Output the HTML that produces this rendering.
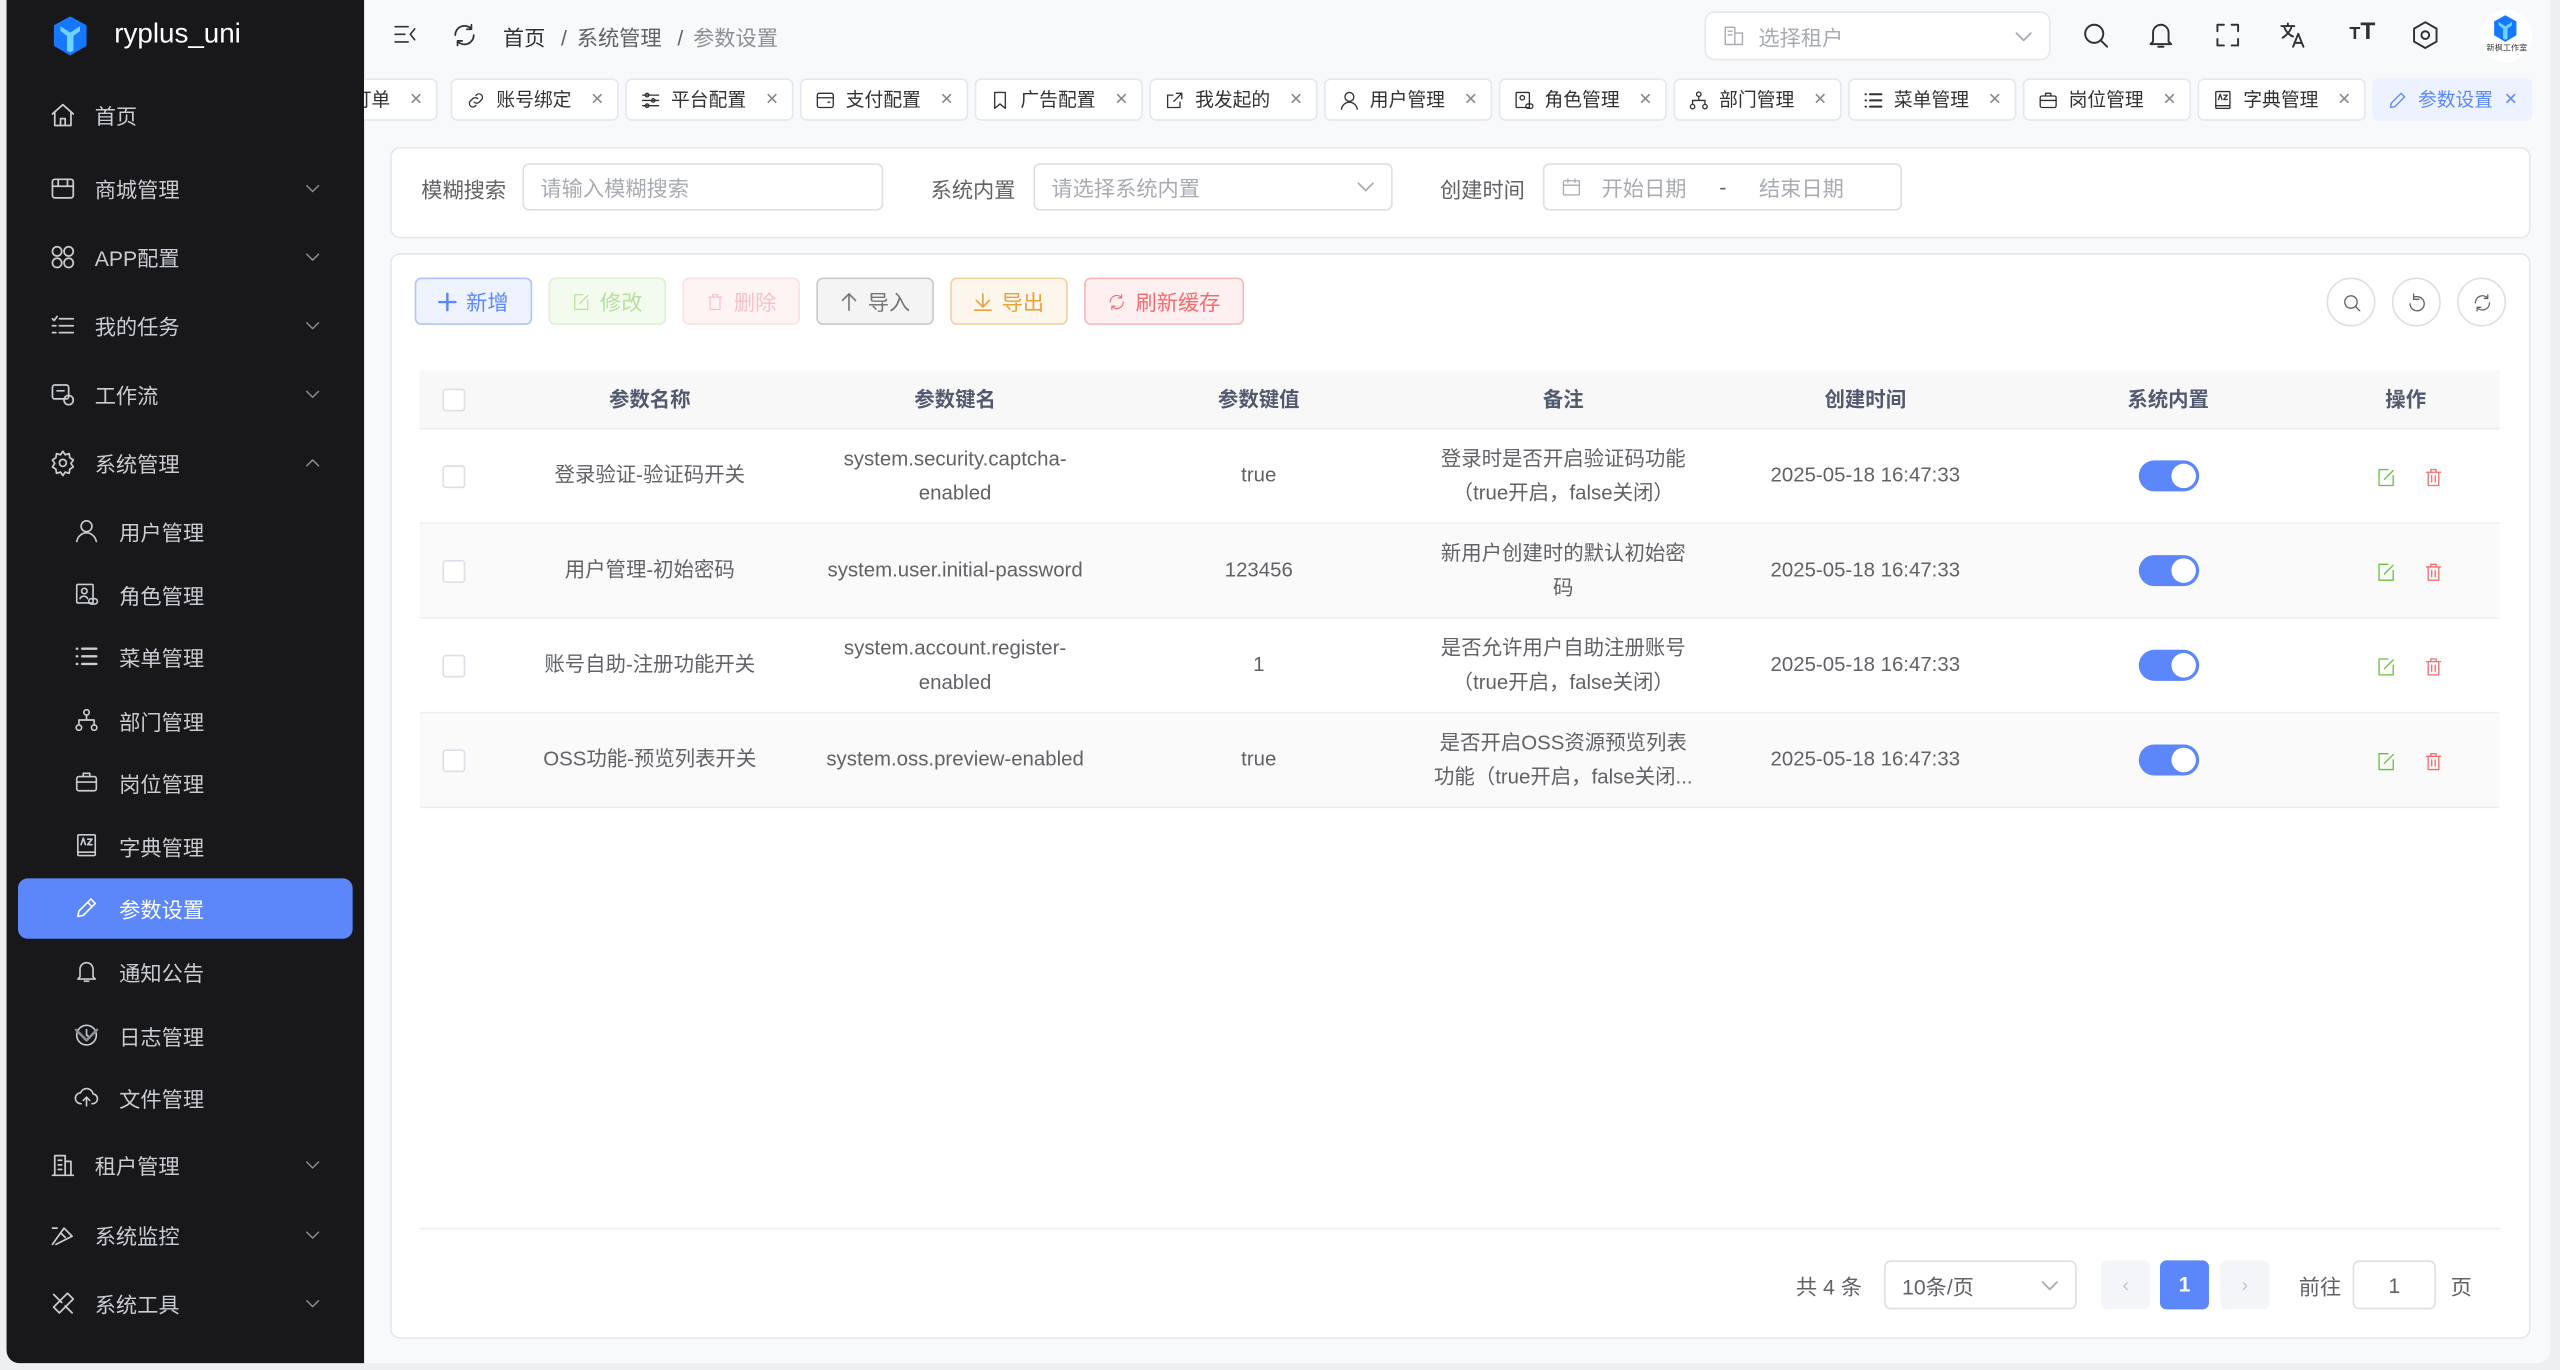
<!DOCTYPE html>
<html><head><meta charset="utf-8">
<style>
*{box-sizing:border-box;margin:0;padding:0}
html,body{width:2560px;height:1370px;overflow:hidden;background:#eeeff1}
body{font-family:"Liberation Sans","Noto Sans CJK SC",sans-serif;}
#f{position:absolute;left:0;top:0;width:1568px;height:839px;transform:scale(1.632653);transform-origin:0 0;background:#eeeff1}
.a{position:absolute}
#app{left:4px;top:0;width:1558px;height:835px;border-radius:0 0 8px 8px;overflow:hidden;background:#f8f9fb}
#side{left:0;top:0;width:219px;height:835px;background:#18181b;color:#c9ccd2;font-size:13px}
.mi{position:absolute;left:0;width:219px;height:38px;display:flex;align-items:center}
.mi svg{position:absolute;left:26px;width:17px;height:17px}
.mi span{position:absolute;left:54px}
.mi.sub svg{left:41px;width:16px;height:16px}
.mi.sub span{left:69px}
.mi .ar{position:absolute;left:183px;width:9px;height:9px;stroke-width:1;color:#8a8d93}
svg{fill:none;stroke:currentColor;stroke-width:1.5;stroke-linecap:round;stroke-linejoin:round}
#tabs{left:219px;top:44px;width:1339px;height:34px;overflow:hidden}
.tab{position:absolute;top:4px;height:26px;background:#fff;border:1px solid #e4e7ed;border-radius:4px;font-size:11.5px;color:#303133;display:flex;align-items:center;padding-left:8px}
.tab svg{width:13px;height:13px;margin-right:6px}
.tab .x{position:absolute;right:8px;font-size:10px;color:#888}
.card{background:#fff;border:1px solid #e4e7ed;border-radius:6px}
.lbl{font-size:13px;color:#606266}
.inp{border:1px solid #dcdfe6;border-radius:4px;height:29px;font-size:13px;color:#a8abb2;display:flex;align-items:center;padding-left:10px;background:#fff}
.btn{position:absolute;top:170px;height:29px;border-radius:4px;font-size:13px;display:flex;align-items:center;justify-content:center;gap:5px}
.btn svg{width:12px;height:12px}
.cb{position:absolute;left:14px;width:14px;height:14px;border:1px solid #dcdfe6;border-radius:2px;background:#fff}
.row{position:absolute;left:0;width:1274px;height:58px;border-bottom:1px solid #ebeef5}
.cell{position:absolute;top:0;height:57px;display:flex;align-items:center;justify-content:center;text-align:center;font-size:12.5px;color:#606266;line-height:21px}
.sw{position:absolute;left:1053px;top:19px;width:37px;height:19px;border-radius:10px;background:#5b87fb}
.sw:after{content:"";position:absolute;right:2px;top:2px;width:15px;height:15px;border-radius:50%;background:#fff}
.op{position:absolute;top:23px;width:13px;height:13px}
.circ{position:absolute;top:170px;width:30px;height:30px;border:1px solid #dcdfe6;border-radius:50%;display:flex;align-items:center;justify-content:center;color:#606266}
.circ svg{width:13px;height:13px}
.hi{position:absolute;top:12px;width:19px;height:19px;color:#303133}
</style></head><body><div id="f">
<div id="app" class="a">
<!-- sidebar -->
<div id="side" class="a">
 <svg class="a" style="left:28px;top:10px;width:22px;height:24px;stroke:none" viewBox="0 0 22 24"><path d="M11 0L21 5.5V18L11 24L1 18V5.5Z" fill="#1677ff"/><path d="M5 6l6 4 6-4v3l-4 3v9l-2 1-2-1v-9L5 9z" fill="#6fd3ff"/></svg>
 <div class="a" style="left:66px;top:11px;font-size:17px;color:#fff">ryplus_uni</div>
 <div class="mi" style="top:51px"><svg viewBox="0 0 24 24"><path d="M3 11L12 3l9 8M5 9v12h14V9M10 21v-6h4v6"/></svg><span>首页</span></div>
 <div class="mi" style="top:96px"><svg viewBox="0 0 24 24"><rect x="3" y="4" width="18" height="16" rx="2"/><path d="M3 10h18M8 4v6M16 4v6"/></svg><span>商城管理</span><svg class="ar" viewBox="0 0 10 10"><path d="M1 3l4 4 4-4"/></svg></div>
 <div class="mi" style="top:138px"><svg viewBox="0 0 24 24"><circle cx="7" cy="7" r="4"/><circle cx="17" cy="7" r="4"/><circle cx="7" cy="17" r="4"/><circle cx="17" cy="17" r="4"/></svg><span>APP配置</span><svg class="ar" viewBox="0 0 10 10"><path d="M1 3l4 4 4-4"/></svg></div>
 <div class="mi" style="top:180px"><svg viewBox="0 0 24 24"><path d="M9 6h12M9 12h12M9 18h12M3 6l1.5 1.5L7 4M3 12h3M3 18h3"/></svg><span>我的任务</span><svg class="ar" viewBox="0 0 10 10"><path d="M1 3l4 4 4-4"/></svg></div>
 <div class="mi" style="top:222px"><svg viewBox="0 0 24 24"><rect x="3" y="4" width="14" height="12" rx="2"/><circle cx="17" cy="17" r="4"/><path d="M7 9h6"/></svg><span>工作流</span><svg class="ar" viewBox="0 0 10 10"><path d="M1 3l4 4 4-4"/></svg></div>
 <div class="mi" style="top:264px"><svg viewBox="0 0 24 24"><circle cx="12" cy="12" r="3"/><path d="M12 2l2 3 3.5-1 .5 3.5 3 2-2 3 2 3-3 2-.5 3.5-3.5-1-2 3-2-3-3.5 1-.5-3.5-3-2 2-3-2-3 3-2L6.5 4 10 5z"/></svg><span>系统管理</span><svg class="ar" viewBox="0 0 10 10"><path d="M1 7l4-4 4 4"/></svg></div>
 <div class="mi sub" style="top:306px"><svg viewBox="0 0 24 24"><circle cx="12" cy="8" r="5"/><path d="M3 22c1-5 5-8 9-8s8 3 9 8"/></svg><span>用户管理</span></div>
 <div class="mi sub" style="top:345px"><svg viewBox="0 0 24 24"><rect x="3" y="3" width="15" height="17" rx="1"/><circle cx="10" cy="9" r="2.5"/><path d="M6 16c1-3 6-3 7 0"/><rect x="14" y="16" width="8" height="5" rx="2.5"/></svg><span>角色管理</span></div>
 <div class="mi sub" style="top:383px"><svg viewBox="0 0 24 24" style="stroke-width:2.2"><path d="M8 5h13M8 12h13M8 19h13M3 5h.5M3 12h.5M3 19h.5"/></svg><span>菜单管理</span></div>
 <div class="mi sub" style="top:422px"><svg viewBox="0 0 24 24"><circle cx="12" cy="5" r="2.5"/><circle cx="5" cy="19" r="2.5"/><circle cx="19" cy="19" r="2.5"/><path d="M12 7.5V12M5 16.5V12h14v4.5"/></svg><span>部门管理</span></div>
 <div class="mi sub" style="top:460px"><svg viewBox="0 0 24 24"><rect x="3" y="7" width="18" height="13" rx="2"/><path d="M9 7V4h6v3M3 12h18"/></svg><span>岗位管理</span></div>
 <div class="mi sub" style="top:499px"><svg viewBox="0 0 24 24"><rect x="4" y="2" width="16" height="19" rx="1"/><path d="M4 18h16M7 11l2-6 2 6M13 6h4l-4 5h4"/></svg><span>字典管理</span></div>
 <div class="a" style="left:7px;top:538px;width:205px;height:37px;background:#5b87fb;border-radius:6px"></div>
 <div class="mi sub" style="top:537px;color:#fff"><svg viewBox="0 0 24 24"><path d="M4 20l1-5L16 4l4 4L9 19z M13 7l4 4"/></svg><span>参数设置</span></div>
 <div class="mi sub" style="top:576px"><svg viewBox="0 0 24 24"><path d="M6 17V10a6 6 0 0112 0v7l2 2H4zM10 21h4"/></svg><span>通知公告</span></div>
 <div class="mi sub" style="top:615px"><svg viewBox="0 0 24 24"><circle cx="12" cy="12" r="9"/><path d="M12 7v5l3 2"/></svg><span>日志管理</span><svg class="ar" viewBox="0 0 10 10"><path d="M1 3l4 4 4-4"/></svg></div>
 <div class="mi sub" style="top:653px"><svg viewBox="0 0 24 24"><path d="M7 18a5 5 0 01-.5-10A6 6 0 0118 9a4.5 4.5 0 01-1 9M12 12v8M9 15l3-3 3 3"/></svg><span>文件管理</span></div>
 <div class="mi" style="top:694px"><svg viewBox="0 0 24 24"><path d="M3 21h18M5 21V4h9v17M14 9h5v12M8 8h3M8 12h3M8 16h3"/></svg><span>租户管理</span><svg class="ar" viewBox="0 0 10 10"><path d="M1 3l4 4 4-4"/></svg></div>
 <div class="mi" style="top:737px"><svg viewBox="0 0 24 24"><path d="M3 20L13 6l7 7-14 7M10 10l4 4M3 6h4"/></svg><span>系统监控</span><svg class="ar" viewBox="0 0 10 10"><path d="M1 3l4 4 4-4"/></svg></div>
 <div class="mi" style="top:779px"><svg viewBox="0 0 24 24"><path d="M4 4l7 7M14 14l6 6M16 3l5 5-12 12-5-5z"/></svg><span>系统工具</span><svg class="ar" viewBox="0 0 10 10"><path d="M1 3l4 4 4-4"/></svg></div>
</div>
<!-- header -->
<svg class="a" style="left:236px;top:13px;width:16px;height:16px;color:#303133" viewBox="0 0 24 24"><path d="M3 5h12M3 12h9M3 19h12M21 7l-4 5 4 5"/></svg>
<svg class="a" style="left:272px;top:13px;width:17px;height:17px;color:#303133" viewBox="0 0 24 24"><path d="M20 12a8 8 0 01-14 5.3M4 12A8 8 0 0118 6.7M18 3v4h-4M6 21v-4h4"/></svg>
<div class="a" style="left:304px;top:13px;font-size:13px;color:#303133">首页 <span style="color:#606266;margin:0 6px">/</span><span style="color:#606266">系统管理</span> <span style="color:#606266;margin:0 6px">/</span><span style="color:#8c8f96">参数设置</span></div>
<div class="a inp" style="left:1040px;top:7px;width:212px;height:30px;border-radius:6px;border-color:#e4e7ed"><svg style="width:14px;height:14px;margin-right:8px" viewBox="0 0 24 24"><path d="M3 21V3h10v18M13 9h8v12H3M6 7h4M6 11h4"/></svg>选择租户<svg style="position:absolute;right:10px;width:11px;height:11px;stroke-width:1" viewBox="0 0 10 10"><path d="M1 3l4 4 4-4"/></svg></div>
<svg class="hi" style="left:1270px" viewBox="0 0 24 24"><circle cx="11" cy="11" r="7"/><path d="M16 16l5 5"/></svg>
<svg class="hi" style="left:1310px" viewBox="0 0 24 24"><path d="M6 17V10a6 6 0 0112 0v7l2 2H4zM10 21h4"/></svg>
<svg class="hi" style="left:1351px" viewBox="0 0 24 24"><path d="M4 9V4h5M15 4h5v5M20 15v5h-5M9 20H4v-5"/></svg>
<svg class="hi" style="left:1391px" viewBox="0 0 24 24"><path d="M3 5h10M8 3v2M5 5c1 4 4 7 7 8M11 5c-1 4-4 7-7 9M12 21l4-10 4 10M13.5 18h5"/></svg>
<div class="a" style="left:1435px;top:11px;font-size:15px;font-weight:bold;color:#303133"><span style="font-size:11px">T</span>T</div>
<svg class="hi" style="left:1472px" viewBox="0 0 24 24"><path d="M12 2l8.7 5v10L12 22l-8.7-5V7z"/><circle cx="12" cy="12" r="3"/></svg>
<div class="a" style="left:1515px;top:6px;width:32px;height:32px;border-radius:50%;background:#fff"><svg style="position:absolute;left:8px;top:3px;width:15px;height:17px;stroke:none" viewBox="0 0 22 24"><path d="M11 0L21 5.5V18L11 24L1 18V5.5Z" fill="#1677ff"/><path d="M5 6l6 4 6-4v3l-4 3v9l-2 1-2-1v-9L5 9z" fill="#6fd3ff"/></svg><div style="position:absolute;left:4px;top:20px;font-size:5px;color:#333">新枫工作室</div></div>
<!-- tabs -->
<div id="tabs" class="a">
<div class="tab" style="left:-30px;width:75px;padding-left:22px"><span>订单</span><span class="x">✕</span></div>
<div class="tab" style="left:53px;width:103px"><svg viewBox="0 0 24 24"><path d="M10 14a4 4 0 005.6 0l3-3a4 4 0 00-5.6-5.6L12 6.5M14 10a4 4 0 00-5.6 0l-3 3a4 4 0 005.6 5.6l1-1"/></svg>账号绑定<span class="x">✕</span></div>
<div class="tab" style="left:160px;width:103px"><svg viewBox="0 0 24 24"><path d="M3 6h18M3 12h18M3 18h18"/><circle cx="8" cy="6" r="2"/><circle cx="15" cy="12" r="2"/><circle cx="8" cy="18" r="2"/></svg>平台配置<span class="x">✕</span></div>
<div class="tab" style="left:267px;width:103px"><svg viewBox="0 0 24 24"><rect x="3" y="4" width="18" height="16" rx="2"/><path d="M3 9h18M15 14h2"/></svg>支付配置<span class="x">✕</span></div>
<div class="tab" style="left:374px;width:103px"><svg viewBox="0 0 24 24"><path d="M6 3h12v18l-6-5-6 5z"/></svg>广告配置<span class="x">✕</span></div>
<div class="tab" style="left:481px;width:103px"><svg viewBox="0 0 24 24"><path d="M14 4h6v6M20 4l-9 9M18 14v6H4V6h6"/></svg>我发起的<span class="x">✕</span></div>
<div class="tab" style="left:588px;width:103px"><svg viewBox="0 0 24 24"><circle cx="12" cy="8" r="5"/><path d="M3 22c1-5 5-8 9-8s8 3 9 8"/></svg>用户管理<span class="x">✕</span></div>
<div class="tab" style="left:695px;width:103px"><svg viewBox="0 0 24 24"><rect x="3" y="3" width="15" height="17" rx="1"/><circle cx="10" cy="9" r="2.5"/><rect x="14" y="16" width="8" height="5" rx="2.5"/></svg>角色管理<span class="x">✕</span></div>
<div class="tab" style="left:802px;width:103px"><svg viewBox="0 0 24 24"><circle cx="12" cy="5" r="2.5"/><circle cx="5" cy="19" r="2.5"/><circle cx="19" cy="19" r="2.5"/><path d="M12 7.5V12M5 16.5V12h14v4.5"/></svg>部门管理<span class="x">✕</span></div>
<div class="tab" style="left:909px;width:103px"><svg viewBox="0 0 24 24" style="stroke-width:2.2"><path d="M8 5h13M8 12h13M8 19h13M3 5h.5M3 12h.5M3 19h.5"/></svg>菜单管理<span class="x">✕</span></div>
<div class="tab" style="left:1016px;width:103px"><svg viewBox="0 0 24 24"><rect x="3" y="7" width="18" height="13" rx="2"/><path d="M9 7V4h6v3M3 12h18"/></svg>岗位管理<span class="x">✕</span></div>
<div class="tab" style="left:1123px;width:103px"><svg viewBox="0 0 24 24"><rect x="4" y="2" width="16" height="19" rx="1"/><path d="M4 18h16M7 11l2-6 2 6M13 6h4l-4 5h4"/></svg>字典管理<span class="x">✕</span></div>
<div class="tab" style="left:1230px;width:98px;background:#ecf2ff;border-color:#ecf2ff;color:#5b87fb"><svg viewBox="0 0 24 24"><path d="M4 20l1-5L16 4l4 4L9 19z"/></svg>参数设置<span class="x" style="color:#5b87fb">✕</span></div>
</div>
<!-- search card -->
<div class="a card" style="left:235px;top:90px;width:1311px;height:56px"></div>
<div class="a lbl" style="left:254px;top:106px">模糊搜索</div>
<div class="a inp" style="left:316px;top:100px;width:221px">请输入模糊搜索</div>
<div class="a lbl" style="left:566px;top:106px">系统内置</div>
<div class="a inp" style="left:629px;top:100px;width:220px">请选择系统内置<svg style="position:absolute;right:10px;width:11px;height:11px;stroke-width:1" viewBox="0 0 10 10"><path d="M1 3l4 4 4-4"/></svg></div>
<div class="a lbl" style="left:878px;top:106px">创建时间</div>
<div class="a inp" style="left:941px;top:100px;width:220px"><svg style="width:13px;height:13px" viewBox="0 0 24 24"><rect x="3" y="5" width="18" height="16" rx="1"/><path d="M3 10h18M8 3v4M16 3v4"/></svg><span style="margin-left:12px">开始日期</span><span style="margin-left:20px;color:#606266">-</span><span style="margin-left:20px">结束日期</span></div>
<!-- main card -->
<div class="a card" style="left:235px;top:155px;width:1311px;height:665px"></div>
<div class="btn" style="left:250px;width:72px;background:#eef3ff;border:1px solid #aec4fd;color:#5b87fb"><svg viewBox="0 0 12 12"><path d="M6 1v10M1 6h10"/></svg>新增</div>
<div class="btn" style="left:332px;width:72px;background:#f3faee;border:1px solid #dcf1cf;color:#b8e0a0"><svg viewBox="0 0 24 24"><path d="M14 3H4v18h16V10M10 14l10-10"/></svg>修改</div>
<div class="btn" style="left:414px;width:72px;background:#fef4f4;border:1px solid #fde2e2;color:#f8c2c2"><svg viewBox="0 0 24 24"><path d="M4 6h16M9 6V3h6v3M6 6v15h12V6"/></svg>删除</div>
<div class="btn" style="left:496px;width:72px;background:#f4f4f5;border:1px solid #c8c9cc;color:#73767a"><svg viewBox="0 0 12 12" style="stroke-width:1"><path d="M6 11V1M2 5l4-4 4 4"/></svg>导入</div>
<div class="btn" style="left:578px;width:72px;background:#fdf6ec;border:1px solid #f5d19e;color:#e6a23c"><svg viewBox="0 0 12 12" style="stroke-width:1"><path d="M6 1v8M2 5l4 4 4-4M1 11h10"/></svg>导出</div>
<div class="btn" style="left:660px;width:98px;background:#fef0f0;border:1px solid #f9b8b8;color:#f56c6c"><svg viewBox="0 0 24 24"><path d="M20 12a8 8 0 01-14 5.3M4 12A8 8 0 0118 6.7M18 3v4h-4M6 21v-4h4"/></svg>刷新缓存</div>
<div class="circ" style="left:1421px"><svg viewBox="0 0 24 24"><circle cx="11" cy="11" r="7"/><path d="M16 16l5 5"/></svg></div>
<div class="circ" style="left:1461px"><svg viewBox="0 0 24 24"><path d="M4 12a8 8 0 108-8H8M8 1v6h6" transform="translate(0 1)"/></svg></div>
<div class="circ" style="left:1501px"><svg viewBox="0 0 24 24"><path d="M20 12a8 8 0 01-14 5.3M4 12A8 8 0 0118 6.7M18 3v4h-4M6 21v-4h4"/></svg></div>
<!-- table -->
<div class="a" style="left:253px;top:227px;width:1274px;height:267px">
 <div class="a" style="left:0;top:0;width:1274px;height:36px;background:#f8f8f9;border-bottom:1px solid #ebeef5">
  <div class="cb" style="top:11px"></div>
  <div class="cell" style="left:41px;width:200px;height:36px;font-weight:bold;color:#515a6e">参数名称</div>
  <div class="cell" style="left:241px;width:174px;height:36px;font-weight:bold;color:#515a6e">参数键名</div>
  <div class="cell" style="left:415px;width:198px;height:36px;font-weight:bold;color:#515a6e">参数键值</div>
  <div class="cell" style="left:613px;width:175px;height:36px;font-weight:bold;color:#515a6e">备注</div>
  <div class="cell" style="left:788px;width:195px;height:36px;font-weight:bold;color:#515a6e">创建时间</div>
  <div class="cell" style="left:983px;width:176px;height:36px;font-weight:bold;color:#515a6e">系统内置</div>
  <div class="cell" style="left:1159px;width:115px;height:36px;font-weight:bold;color:#515a6e">操作</div>
 </div>
 <div class="row" style="top:36px">
  <div class="cb" style="top:22px"></div>
  <div class="cell" style="left:41px;width:200px">登录验证-验证码开关</div>
  <div class="cell" style="left:241px;width:174px;padding:0 10px">system.security.captcha-<br>enabled</div>
  <div class="cell" style="left:415px;width:198px">true</div>
  <div class="cell" style="left:613px;width:175px;padding:0 10px">登录时是否开启验证码功能（true开启，false关闭）</div>
  <div class="cell" style="left:788px;width:195px">2025-05-18 16:47:33</div>
  <div class="sw"></div>
  <svg class="op" style="left:1198px;color:#67c23a" viewBox="0 0 24 24"><path d="M14 3H4v18h16V10M10 14l10-10"/></svg><svg class="op" style="left:1227px;color:#f56c6c" viewBox="0 0 24 24"><path d="M4 6h16M9 6V3h6v3M6 6v15h12V6M10 10v7M14 10v7"/></svg>
 </div>
 <div class="row" style="top:94px;background:#fafafa">
  <div class="cb" style="top:22px"></div>
  <div class="cell" style="left:41px;width:200px">用户管理-初始密码</div>
  <div class="cell" style="left:241px;width:174px">system.user.initial-password</div>
  <div class="cell" style="left:415px;width:198px">123456</div>
  <div class="cell" style="left:613px;width:175px;padding:0 10px">新用户创建时的默认初始密码</div>
  <div class="cell" style="left:788px;width:195px">2025-05-18 16:47:33</div>
  <div class="sw"></div>
  <svg class="op" style="left:1198px;color:#67c23a" viewBox="0 0 24 24"><path d="M14 3H4v18h16V10M10 14l10-10"/></svg><svg class="op" style="left:1227px;color:#f56c6c" viewBox="0 0 24 24"><path d="M4 6h16M9 6V3h6v3M6 6v15h12V6M10 10v7M14 10v7"/></svg>
 </div>
 <div class="row" style="top:152px">
  <div class="cb" style="top:22px"></div>
  <div class="cell" style="left:41px;width:200px">账号自助-注册功能开关</div>
  <div class="cell" style="left:241px;width:174px;padding:0 10px">system.account.register-<br>enabled</div>
  <div class="cell" style="left:415px;width:198px">1</div>
  <div class="cell" style="left:613px;width:175px;padding:0 10px">是否允许用户自助注册账号（true开启，false关闭）</div>
  <div class="cell" style="left:788px;width:195px">2025-05-18 16:47:33</div>
  <div class="sw"></div>
  <svg class="op" style="left:1198px;color:#67c23a" viewBox="0 0 24 24"><path d="M14 3H4v18h16V10M10 14l10-10"/></svg><svg class="op" style="left:1227px;color:#f56c6c" viewBox="0 0 24 24"><path d="M4 6h16M9 6V3h6v3M6 6v15h12V6M10 10v7M14 10v7"/></svg>
 </div>
 <div class="row" style="top:210px;background:#fafafa">
  <div class="cb" style="top:22px"></div>
  <div class="cell" style="left:41px;width:200px">OSS功能-预览列表开关</div>
  <div class="cell" style="left:241px;width:174px">system.oss.preview-enabled</div>
  <div class="cell" style="left:415px;width:198px">true</div>
  <div class="cell" style="left:613px;width:175px;padding:0 8px">是否开启OSS资源预览列表功能（true开启，false关闭...</div>
  <div class="cell" style="left:788px;width:195px">2025-05-18 16:47:33</div>
  <div class="sw"></div>
  <svg class="op" style="left:1198px;color:#67c23a" viewBox="0 0 24 24"><path d="M14 3H4v18h16V10M10 14l10-10"/></svg><svg class="op" style="left:1227px;color:#f56c6c" viewBox="0 0 24 24"><path d="M4 6h16M9 6V3h6v3M6 6v15h12V6M10 10v7M14 10v7"/></svg>
 </div>
</div>
<div class="a" style="left:253px;top:752px;width:1274px;height:1px;background:#ebeef5"></div>
<!-- pagination -->
<div class="a lbl" style="left:1096px;top:778px">共 4 条</div>
<div class="a inp" style="left:1150px;top:772px;width:118px;height:30px;color:#606266">10条/页<svg style="position:absolute;right:10px;width:11px;height:11px;color:#a8abb2;stroke-width:1" viewBox="0 0 10 10"><path d="M1 3l4 4 4-4"/></svg></div>
<div class="a" style="left:1283px;top:772px;width:30px;height:30px;background:#f4f5f8;border-radius:4px;color:#c0c4cc;text-align:center;line-height:30px;font-size:12px">‹</div>
<div class="a" style="left:1319px;top:772px;width:30px;height:30px;background:#5b87fb;border-radius:4px;color:#fff;text-align:center;line-height:30px;font-size:13px;font-weight:bold">1</div>
<div class="a" style="left:1356px;top:772px;width:30px;height:30px;background:#f4f5f8;border-radius:4px;color:#c0c4cc;text-align:center;line-height:30px;font-size:12px">›</div>
<div class="a lbl" style="left:1404px;top:778px">前往</div>
<div class="a inp" style="left:1437px;top:772px;width:51px;height:30px;color:#606266;justify-content:center;padding:0">1</div>
<div class="a lbl" style="left:1497px;top:778px">页</div>
</div>
</div></body></html>
